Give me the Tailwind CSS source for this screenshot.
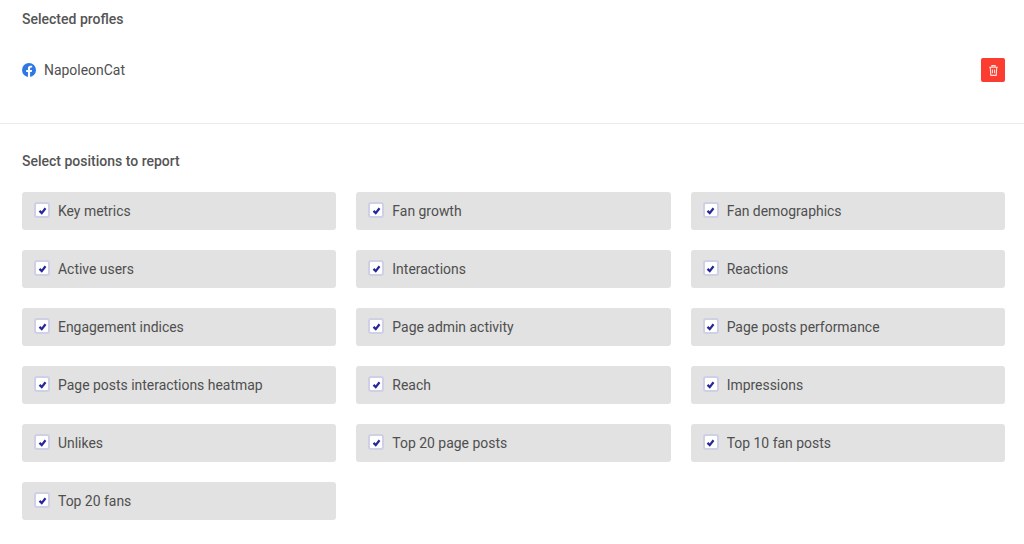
<!doctype html>
<html lang="en">
  <head>
    <meta charset="UTF-8" />
    <title>Selected profiles</title>
    <script src="https://cdn.jsdelivr.net/npm/@tailwindcss/browser@4"></script>
  </head>
  <body class="h-[544px] overflow-hidden bg-white font-['Roboto',sans-serif] text-[#4f4f4f]">
    <section class="h-[124px] border-b border-[#ececec] pt-[11px] pr-[19px] pl-[22px]">
      <h2 class="text-sm leading-4 font-medium text-[#555]">Selected profles</h2>
      <div class="mt-[31px] flex h-6 items-center justify-between">
        <div class="flex items-center gap-2">
          <svg class="size-[14px]" viewBox="0 0 24 24">
            <circle cx="12" cy="12" r="12" fill="#2f78e4" />
            <path fill="#fff" d="M16.700 15.500l.5-3.500h-3.300V9.800c0-1 .5-1.900 2-1.900h1.500v-3s-1.400-.2-2.700-.2c-2.700 0-4.500 1.600-4.500 4.600V12h-3v3.500h3V24h3.700v-8.500z" />
          </svg>
          <span class="text-[13.950px]">NapoleonCat</span>
        </div>
        <button class="flex size-6 items-center justify-center rounded-[2px] bg-[#fb3c30]">
          <svg class="size-[13px] text-white/85" viewBox="0 0 24 24" fill="none" stroke="currentColor" stroke-width="2">
            <path d="M4 6h16M9 6V3h6v3M6 6l1 15h10l1-15M10 10v7M14 10v7" />
          </svg>
        </button>
      </div>
    </section>

    <section class="px-[22px] pt-[29px]">
      <h2 class="text-sm leading-4 font-medium text-[#555]">Select positions to report</h2>
      <div class="mt-[23px] grid w-[983px] grid-cols-3 gap-x-[20px] gap-y-[20px] text-[13.950px]">
        <label class="flex h-[38px] items-center gap-[8px] rounded-[3px] bg-[#e2e2e2] pl-[12px]"><span class="flex size-[16px] -translate-y-px items-center justify-center rounded-[3px] border-2 border-[#cfcfe6] bg-white"><svg class="size-[9px]" viewBox="0 0 12 12" fill="none" stroke="#26279b" stroke-width="3"><path d="M2 6.500l3 3 5-6.500" /></svg></span>Key metrics</label>
        <label class="flex h-[38px] items-center gap-[8px] rounded-[3px] bg-[#e2e2e2] pl-[12px]"><span class="flex size-[16px] -translate-y-px items-center justify-center rounded-[3px] border-2 border-[#cfcfe6] bg-white"><svg class="size-[9px]" viewBox="0 0 12 12" fill="none" stroke="#26279b" stroke-width="3"><path d="M2 6.500l3 3 5-6.500" /></svg></span>Fan growth</label>
        <label class="flex h-[38px] items-center gap-[8px] rounded-[3px] bg-[#e2e2e2] pl-[12px]"><span class="flex size-[16px] -translate-y-px items-center justify-center rounded-[3px] border-2 border-[#cfcfe6] bg-white"><svg class="size-[9px]" viewBox="0 0 12 12" fill="none" stroke="#26279b" stroke-width="3"><path d="M2 6.500l3 3 5-6.500" /></svg></span>Fan demographics</label>
        <label class="flex h-[38px] items-center gap-[8px] rounded-[3px] bg-[#e2e2e2] pl-[12px]"><span class="flex size-[16px] -translate-y-px items-center justify-center rounded-[3px] border-2 border-[#cfcfe6] bg-white"><svg class="size-[9px]" viewBox="0 0 12 12" fill="none" stroke="#26279b" stroke-width="3"><path d="M2 6.500l3 3 5-6.500" /></svg></span>Active users</label>
        <label class="flex h-[38px] items-center gap-[8px] rounded-[3px] bg-[#e2e2e2] pl-[12px]"><span class="flex size-[16px] -translate-y-px items-center justify-center rounded-[3px] border-2 border-[#cfcfe6] bg-white"><svg class="size-[9px]" viewBox="0 0 12 12" fill="none" stroke="#26279b" stroke-width="3"><path d="M2 6.500l3 3 5-6.500" /></svg></span>Interactions</label>
        <label class="flex h-[38px] items-center gap-[8px] rounded-[3px] bg-[#e2e2e2] pl-[12px]"><span class="flex size-[16px] -translate-y-px items-center justify-center rounded-[3px] border-2 border-[#cfcfe6] bg-white"><svg class="size-[9px]" viewBox="0 0 12 12" fill="none" stroke="#26279b" stroke-width="3"><path d="M2 6.500l3 3 5-6.500" /></svg></span>Reactions</label>
        <label class="flex h-[38px] items-center gap-[8px] rounded-[3px] bg-[#e2e2e2] pl-[12px]"><span class="flex size-[16px] -translate-y-px items-center justify-center rounded-[3px] border-2 border-[#cfcfe6] bg-white"><svg class="size-[9px]" viewBox="0 0 12 12" fill="none" stroke="#26279b" stroke-width="3"><path d="M2 6.500l3 3 5-6.500" /></svg></span>Engagement indices</label>
        <label class="flex h-[38px] items-center gap-[8px] rounded-[3px] bg-[#e2e2e2] pl-[12px]"><span class="flex size-[16px] -translate-y-px items-center justify-center rounded-[3px] border-2 border-[#cfcfe6] bg-white"><svg class="size-[9px]" viewBox="0 0 12 12" fill="none" stroke="#26279b" stroke-width="3"><path d="M2 6.500l3 3 5-6.500" /></svg></span>Page admin activity</label>
        <label class="flex h-[38px] items-center gap-[8px] rounded-[3px] bg-[#e2e2e2] pl-[12px]"><span class="flex size-[16px] -translate-y-px items-center justify-center rounded-[3px] border-2 border-[#cfcfe6] bg-white"><svg class="size-[9px]" viewBox="0 0 12 12" fill="none" stroke="#26279b" stroke-width="3"><path d="M2 6.500l3 3 5-6.500" /></svg></span>Page posts performance</label>
        <label class="flex h-[38px] items-center gap-[8px] rounded-[3px] bg-[#e2e2e2] pl-[12px]"><span class="flex size-[16px] -translate-y-px items-center justify-center rounded-[3px] border-2 border-[#cfcfe6] bg-white"><svg class="size-[9px]" viewBox="0 0 12 12" fill="none" stroke="#26279b" stroke-width="3"><path d="M2 6.500l3 3 5-6.500" /></svg></span>Page posts interactions heatmap</label>
        <label class="flex h-[38px] items-center gap-[8px] rounded-[3px] bg-[#e2e2e2] pl-[12px]"><span class="flex size-[16px] -translate-y-px items-center justify-center rounded-[3px] border-2 border-[#cfcfe6] bg-white"><svg class="size-[9px]" viewBox="0 0 12 12" fill="none" stroke="#26279b" stroke-width="3"><path d="M2 6.500l3 3 5-6.500" /></svg></span>Reach</label>
        <label class="flex h-[38px] items-center gap-[8px] rounded-[3px] bg-[#e2e2e2] pl-[12px]"><span class="flex size-[16px] -translate-y-px items-center justify-center rounded-[3px] border-2 border-[#cfcfe6] bg-white"><svg class="size-[9px]" viewBox="0 0 12 12" fill="none" stroke="#26279b" stroke-width="3"><path d="M2 6.500l3 3 5-6.500" /></svg></span>Impressions</label>
        <label class="flex h-[38px] items-center gap-[8px] rounded-[3px] bg-[#e2e2e2] pl-[12px]"><span class="flex size-[16px] -translate-y-px items-center justify-center rounded-[3px] border-2 border-[#cfcfe6] bg-white"><svg class="size-[9px]" viewBox="0 0 12 12" fill="none" stroke="#26279b" stroke-width="3"><path d="M2 6.500l3 3 5-6.500" /></svg></span>Unlikes</label>
        <label class="flex h-[38px] items-center gap-[8px] rounded-[3px] bg-[#e2e2e2] pl-[12px]"><span class="flex size-[16px] -translate-y-px items-center justify-center rounded-[3px] border-2 border-[#cfcfe6] bg-white"><svg class="size-[9px]" viewBox="0 0 12 12" fill="none" stroke="#26279b" stroke-width="3"><path d="M2 6.500l3 3 5-6.500" /></svg></span>Top 20 page posts</label>
        <label class="flex h-[38px] items-center gap-[8px] rounded-[3px] bg-[#e2e2e2] pl-[12px]"><span class="flex size-[16px] -translate-y-px items-center justify-center rounded-[3px] border-2 border-[#cfcfe6] bg-white"><svg class="size-[9px]" viewBox="0 0 12 12" fill="none" stroke="#26279b" stroke-width="3"><path d="M2 6.500l3 3 5-6.500" /></svg></span>Top 10 fan posts</label>
        <label class="flex h-[38px] items-center gap-[8px] rounded-[3px] bg-[#e2e2e2] pl-[12px]"><span class="flex size-[16px] -translate-y-px items-center justify-center rounded-[3px] border-2 border-[#cfcfe6] bg-white"><svg class="size-[9px]" viewBox="0 0 12 12" fill="none" stroke="#26279b" stroke-width="3"><path d="M2 6.500l3 3 5-6.500" /></svg></span>Top 20 fans</label>
      </div>
    </section>
  </body>
</html>
